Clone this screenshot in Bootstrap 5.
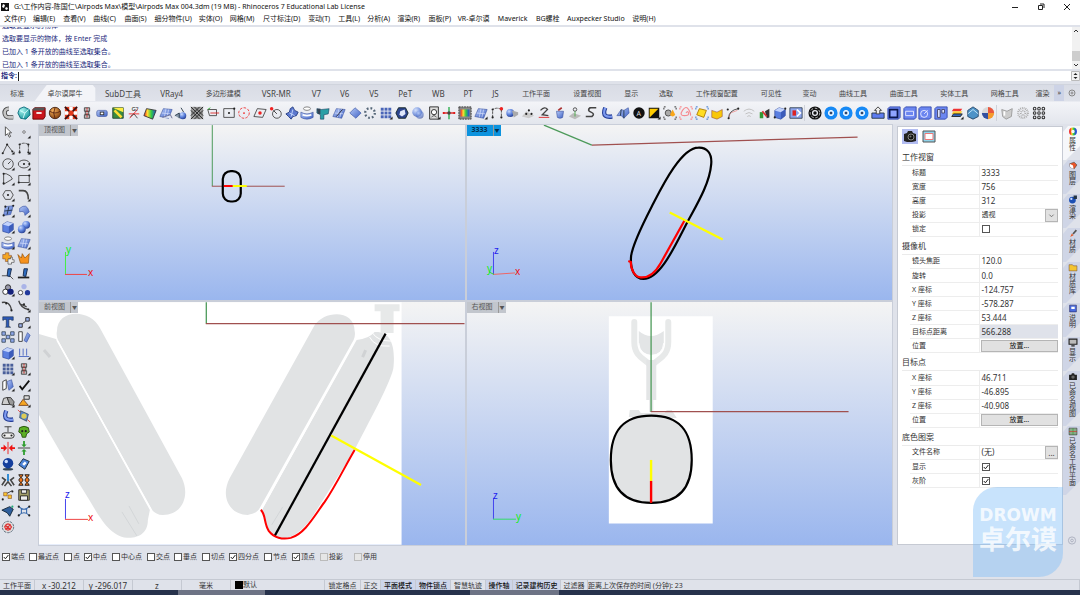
<!DOCTYPE html>
<html lang="zh-CN">
<head>
<meta charset="utf-8">
<meta name="viewport" content="width=device-width, initial-scale=1">
<title>Rhinoceros 7</title>
<link href="https://cdn.jsdelivr.net/npm/bootstrap@5.3.0/dist/css/bootstrap.min.css" rel="stylesheet">
<script src="https://cdn.jsdelivr.net/npm/bootstrap@5.3.0/dist/js/bootstrap.bundle.min.js"></script>
<style>
:root{--frame:#dfe2ea;--line:#c3c8d2;--ink:#333}
body{font-family:"Noto Sans","Noto Sans CJK SC",sans-serif;font-size:7px;line-height:10px;color:var(--ink);background:var(--frame)}
button{border:0;background:none;padding:0;font:inherit;color:inherit;line-height:inherit;white-space:nowrap}
svg{display:block}
.s8{font-size:8px}
.app-shell{min-height:100vh;position:relative}
.titlebar{height:13px;background:#fff;color:#111}
.winctl{gap:18px;padding-right:9px}
.menubar{height:12px;background:#fff;color:#111;grid-template-columns:29fr 30fr 30fr 31fr 30fr 44fr 31fr 33fr 45fr 30fr 29fr 30fr 31fr 29fr 40fr 38fr 31fr 65fr 446fr;padding-left:4px}
.menubar button{text-align:left}
.history{height:46px;border:solid var(--frame);border-width:2px 0;background:#fff;color:#1c2a7c}
.history-log{line-height:13px;margin-top:-8px;padding-left:2px}
.prompt{height:10px;background:#fff;color:#1c2a7c}
.prompt input{border:0;border-left:1px solid #222;outline:0;height:9px;padding:0;font:inherit}
.prompt label{font-weight:700;padding:0 1px 0 1px}
.scroller{width:8px;background:#f1f1f1}
.scroller i{width:8px;height:10px;background:#cdcdcd;margin-top:7px}
.tabbar{margin-top:3px;height:17px;border-top:1px solid #d0d4dd;background:linear-gradient(#d9dce5,#dfe2ea);color:#444;overflow:hidden}
.tabgrid{grid-template-columns:35fr 65fr 48fr 50fr 54fr 53fr 28fr 29fr 30fr 33fr 34fr 26fr 29fr 53fr 50fr 39fr 31fr 71fr 39fr 38fr 50fr 52fr 50fr 52fr 24fr}
.tabgrid button{height:16px;overflow:hidden;padding-top:2px}
.tabgrid button.on{background:#f3f4f8;clip-path:polygon(0 100%,12px 0,90% 0,94% 3px,94% 100%);padding-right:4px}
.more-tabs{background:#cdd3e6;padding:0 3px}
.toolrow{height:23px;background:linear-gradient(#f3f4f8,#e3e6ed);padding:0 33px 0 0;border-top:1px solid #e9ebf1}
.toolrow button{flex:1 1 0;min-width:0}
.toolrow svg,.sidetools svg{width:14px;height:14px;margin:auto}
.tsep{width:3px;height:16px;border-left:1px solid #cfd2da}
.sidetools{width:38px;padding:0 6px 11px 0;grid-template-columns:1fr 1fr;grid-auto-rows:1fr}
.views{grid-template-columns:1fr 1fr;grid-template-rows:175fr 243fr;gap:2px;background:#c9ced9;border:1px solid #c9ced9}
.view3d{position:relative;overflow:hidden;background:linear-gradient(#f4f4f4,#9ab6ee);min-height:0}
.view3d>svg{position:absolute;inset:0;width:100%;height:100%}
.vtag{position:absolute;left:0;top:0;height:11px;background:#c2c6cd;color:#555}
.vtag b{font-weight:400;padding:0 5px}
.vtag span{border-left:1px solid #999;font-size:5px;padding:0 1px}
.vtag.cur{background:#0c93de;color:#04304f}
.vtag.cur b{font-weight:700}
.props{width:166px;background:#fff;margin:2px 0 1px 4px;border:1px solid #c6cad3;padding:2px 4px 0}
.picks{height:19px;gap:3px}
.picks button{width:16px;height:15px}
.picks button.on{background:#b3bdf2}
.sect{font-size:8px;line-height:17px;height:18px;border-bottom:1px solid #ebebeb;margin:0;font-weight:400}
.ptable{width:148px;margin-left:8px;border-collapse:collapse;table-layout:fixed}
.ptable td,.ptable th{height:14px;padding:0 0 0 2px;border-bottom:1px solid #ededed;font-weight:400;line-height:12px;white-space:nowrap}
.ptable th{width:69px;border-right:1px solid #ededed}
.ptable td{font-size:8px}
.ptable td.full{padding:0 0 0 1px}
.ptable td.locked{background:#dfe2ea}
.grey-btn{background:#e1e1e1;border:1px solid #b5b5b5;font-size:7px;line-height:10px;width:100%;display:block;height:12px;color:#111}
.side-btn{width:13px;height:13px;background:#e1e1e1;border:1px solid #b5b5b5;line-height:9px}
.ptable select{appearance:none;border:0;background:none;font:inherit;font-size:7px;color:inherit;padding:0;width:60px;line-height:10px}
input[type=checkbox]{appearance:none;width:8px;height:8px;border:1px solid #555;background:#fff;margin:0;flex:none;display:block}
input[type=checkbox]:checked{background:#fff url("data:image/svg+xml,%3Csvg xmlns='http://www.w3.org/2000/svg' viewBox='0 0 6 6'%3E%3Cpath d='M.8 3 2.4 4.8 5.4 1' fill='none' stroke='%23222'/%3E%3C/svg%3E")}
input[type=checkbox]:disabled{border-color:#bbb;background:#e6e6e6}
.vtabs{width:17px;padding:2px 0 0}
.vtabs button{width:17px;padding:1px 0 9px 2px;line-height:7px;background:#cfd5e6;clip-path:polygon(0 6px,5px 0,100% 0,100% calc(100% - 14px),3px 100%,0 100%)}
.vtabs button.on{background:#f6f7fa}
.vtabs svg{width:10px;height:9px;margin:0 auto 1px}
.vtabs span{display:block;width:7px;margin:auto;white-space:normal;word-break:break-all}
.osnaps{height:33px;padding:7px 0 0 2px;grid-template-columns:27fr 35fr 20fr 28fr 35fr 27fr 28fr 27fr 35fr 28fr 28fr 34fr 726fr}
.osnaps label{gap:1px;height:8px;white-space:nowrap}
.statusbar{height:11px;border-top:1px solid #c5c9d2;grid-template-columns:35fr 49fr 49fr 49fr 49fr 94fr 36fr 20fr 35fr 35fr 35fr 27fr 48fr 27fr 492fr;overflow:hidden}
.statusbar>*{border-right:1px solid #c5c9d2;overflow:hidden;white-space:nowrap;text-align:center;line-height:12px}
.statusbar .on{background:#cdd5ea;color:#111;font-weight:500}
.taskbar{height:5px;background:#27324c}
.taskbar i{height:5px;background:#6d7385}
.wmark{position:absolute;right:17px;bottom:18px;width:90px;height:90px;border-radius:24px 0 24px 0;background:rgba(124,188,247,.42);color:rgba(255,255,255,.8);text-align:center;font-weight:700;padding-top:18px}
.wmark div{font-family:"DejaVu Sans";font-size:17px;line-height:20px}
.wmark p{font-size:26px;line-height:28px;margin:0}
</style>
</head>
<body>
<svg width="0" height="0" class="position-absolute" aria-hidden="true"><defs>
<radialGradient id="gb" cx=".35" cy=".3" r=".8"><stop offset="0" stop-color="#c9dafd"/><stop offset=".5" stop-color="#5f84de"/><stop offset="1" stop-color="#1f3688"/></radialGradient>
<radialGradient id="gt" cx=".35" cy=".3" r=".8"><stop offset="0" stop-color="#a6f3ee"/><stop offset="1" stop-color="#0c8f95"/></radialGradient>
<radialGradient id="go" cx=".35" cy=".3" r=".8"><stop offset="0" stop-color="#f6b25c"/><stop offset="1" stop-color="#7a3606"/></radialGradient>
<linearGradient id="gr"><stop offset="0" stop-color="#e22"/><stop offset=".3" stop-color="#fd3"/><stop offset=".6" stop-color="#3c4"/><stop offset="1" stop-color="#24d"/></linearGradient>
<linearGradient id="gl" x2="1" y2="1"><stop offset="0" stop-color="#b5c9f8"/><stop offset="1" stop-color="#3f62c4"/></linearGradient>
</defs></svg>

<div class="app-shell d-flex flex-column">
  <header class="titlebar d-flex align-items-center">
    <svg width="10" height="10" viewBox="0 0 10 10"><path d="M1 1h8v8H1z" fill="#111"/><path d="M3 2l2 1-1 3-2-1zM6 5l2 1-1 2-2-1z" fill="#fff"/></svg>
    <span class="ms-1 flex-fill text-nowrap">G:\工作内容-陈国仁\Airpods Max\模型\Airpods Max 004.3dm (19 MB) - Rhinoceros 7 Educational Lab License</span>
    <div class="winctl d-flex">
      <button aria-label="最小化"><svg width="8" height="8" viewBox="0 0 8 8"><path d="M1 4.500h6" stroke="#222"/></svg></button>
      <button aria-label="还原"><svg width="8" height="8" viewBox="0 0 8 8" fill="none" stroke="#222"><path d="M1.500 2.500h4v4h-4zM3 1h4v4"/></svg></button>
      <button aria-label="关闭"><svg width="8" height="8" viewBox="0 0 8 8"><path d="M1 1l6 6M7 1L1 7" stroke="#222"/></svg></button>
    </div>
  </header>
  <nav class="menubar d-grid align-items-center">
    <button>文件(F)</button><button>编辑(E)</button><button>查看(V)</button><button>曲线(C)</button><button>曲面(S)</button><button>细分物件(U)</button><button>实体(O)</button><button>网格(M)</button><button>尺寸标注(D)</button><button>变动(T)</button><button>工具(L)</button><button>分析(A)</button><button>渲染(R)</button><button>面板(P)</button><button>VR-卓尔谟</button><button>Maverick</button><button>BG螺栓</button><button>Auxpecker Studio</button><button>说明(H)</button>
  </nav>
  <section class="history d-flex overflow-hidden">
    <div class="history-log flex-fill"><div>选取要显示的物体</div><div>选取要显示的物体，按 Enter 完成</div><div>已加入 1 条开放的曲线至选取集合。</div><div>已加入 1 条开放的曲线至选取集合。</div></div>
    <div class="scroller d-flex flex-column align-items-center justify-content-between">
      <svg width="6" height="8" viewBox="0 0 6 8"><path d="M1 5l2-2 2 2" fill="none" stroke="#333"/></svg><i class="mt-auto"></i>
      <svg width="6" height="8" viewBox="0 0 6 8"><path d="M1 3l2 2 2-2" fill="none" stroke="#333"/></svg>
    </div>
  </section>
  <section class="prompt d-flex align-items-center"><label for="cmd">指令:</label><input id="cmd" class="flex-fill">
    <svg width="9" height="10" viewBox="0 0 9 10"><path d="M.5 .5h8v9h-8z" fill="#f4f4f4" stroke="#bbb"/><path d="M2.500 4l2-2 2 2zM2.500 6l2 2 2-2z" fill="#222"/></svg></section>
  <div class="tabbar d-flex">
    <div class="tabgrid d-grid flex-fill">
      <button>标准</button><button class="on">卓尔谟犀牛</button><button class="s8">SubD工具</button><button class="s8">VRay4</button><button>多边形建模</button><button class="s8">VSR-MR</button><button class="s8">V7</button><button class="s8">V6</button><button class="s8">V5</button><button class="s8">PeT</button><button class="s8">WB</button><button class="s8">PT</button><button class="s8">JS</button><button>工作平面</button><button>设置视图</button><button>显示</button><button>选取</button><button>工作视窗配置</button><button>可见性</button><button>变动</button><button>曲线工具</button><button>曲面工具</button><button>实体工具</button><button>网格工具</button><button>渲染</button>
    </div>
    <button class="more-tabs">»</button>
    <button class="px-1" aria-label="选项"><svg width="8" height="8" viewBox="0 0 8 8" fill="none" stroke="#888"><circle cx="4" cy="4" r="3"/><circle cx="4" cy="4" r="1"/></svg></button>
  </div>
  <div class="toolrow d-flex align-items-center" id="topTools"></div>

  <main class="d-flex flex-fill">
    <div class="sidetools d-grid" id="sideTools"></div>
    <div class="views d-grid flex-fill">
      <div class="view3d"><svg viewBox="39 125 426 175" fill="none">
        <path d="M212.500 125v61" stroke="#4c9a5a"/><path d="M212 186.200h73" stroke="#a0504f"/>
        <rect x="223" y="171" width="18" height="30.500" rx="8" stroke="#000" stroke-width="2.200"/>
        <path d="M224 186h9" stroke="#f00" stroke-width="2"/><path d="M233 186h14" stroke="#ff0" stroke-width="2"/>
        <path d="M65.500 252v22" stroke="#4e4"/><path d="M65 274.500h22" stroke="#e44"/>
        <text x="66" y="253" font-size="10" fill="#1e1">y</text><text x="88" y="276" font-size="10" fill="#e11">x</text></svg>
        <div class="vtag d-flex"><b>顶视图</b><span>▼</span></div></div>
      <div class="view3d"><svg viewBox="467 125 426 175" fill="none">
        <path d="M544 125l48 20" stroke="#4c9a5a" stroke-width="1.300"/><path d="M592 145l266-8" stroke="#a0504f" stroke-width="1.200"/>
        <path d="M698.700 147.500C707 147.200 712.500 153 711.500 164C710 183 698 203 687.700 222C676 244 661 279 643.700 279C635 279 630 270 631.300 256C633 243 645 220 652.700 205C661 189 681 147.500 698.700 147.500Z" stroke="#000" stroke-width="2.200"/>
        <path d="M670 212.500l53 27" stroke="#ff0" stroke-width="2.200"/>
        <path d="M628.500 261L631 262C631 270 635 277 641 277.500C650 278 656 272 661 263L684.500 221" stroke="#f00" stroke-width="2.200"/>
        <path d="M493.500 252v22.500" stroke="#44e"/><path d="M493 274.500l22-1.500" stroke="#e66"/><path d="M489 272l5 2.500" stroke="#3d3"/>
        <text x="494" y="254" font-size="10" fill="#22e">z</text><text x="487" y="272" font-size="10" fill="#1e1">y</text><text x="515" y="275" font-size="10" fill="#e11">x</text></svg>
        <div class="vtag cur d-flex"><b>3333</b><span>▼</span></div></div>
      <div class="view3d"><svg viewBox="39 302 426 243" fill="none">
        <path d="M39 302h363v243H39z" fill="#fff"/>
        <g fill="#e1e3e4">
          <path d="M57 331C57 309 90 308 100 328L182 478C190 494 184 515 163 515C158 515 155 513 152 510L58 340Q56 335 57 331Z"/>
          <path d="M39 334l17 5L150 510Q149 515 148 520C148 534 138 538 127 538C110 536 100 518 90 501C70 469 54 441 39 415Z"/>
          <path d="M355 331C355 309 325 310 315 325L230 478C220 497 230 515 248 515C254 514 258 512 260 508L354 340Q356 335 355 331Z"/>
          <path d="M357 340q12-1 18-8c14-1 21 10 19 34c0 12-28 62-39 84l-38 60c-10 17-24 31-38 28c-9-2-12-10-14-19l-3-9z"/>
          <path d="M375 304h25v7h-6v22h-13v-22h-6z" fill="#e7e9e9"/></g>
        <path d="M57 340l95 171M355 341l-93 168" stroke="#fff" stroke-width="1.500"/>
        <path d="M370 337q5 10 20 9M373 333q5 8 19 8" stroke="#fff"/><path d="M122 512l15 24M129 506l10 18M283 507l-11 18" stroke="#d3d6d8"/><path d="M44 350l6 7M366 350l-3 7" stroke="#d0d2d4" stroke-width="3"/>
        <path d="M206.500 302v21.500" stroke="#4c9a5a" stroke-width="1.300"/><path d="M206 323.500h259" stroke="#a0504f" stroke-width="1.300"/>
        <path d="M386 333.500L274.700 536.500" stroke="#000" stroke-width="2.200"/>
        <path d="M331.500 435.500l90 49.500" stroke="#ff0" stroke-width="2.200"/>
        <path d="M261 510C266 514 264 523 269 531C274 538 283 540 291 538C305 534 314 517 325 502C336 486 345 467 355 450" stroke="#f00" stroke-width="2"/>
        <path d="M65.500 499v20" stroke="#44e"/><path d="M65 519.500h23" stroke="#e44"/>
        <text x="65" y="498" font-size="10" fill="#22e">z</text><text x="88" y="521" font-size="10" fill="#e11">x</text></svg>
        <div class="vtag d-flex"><b>前视图</b><span>▼</span></div></div>
      <div class="view3d"><svg viewBox="467 302 426 243" fill="none">
        <path d="M609 316h104v207.500H609z" fill="#fff"/>
        <path d="M634.500 322v20c0 14 9 16 15 22M668.500 322v20c0 14-9 16-15 22" stroke="#e7e9e9" stroke-width="6" stroke-linecap="round"/>
        <path d="M639 331q12 10 25 0v14q-2 10-12 10t-13-10z" fill="#e3e5e6"/>
        <path d="M646.500 360h10v40h-3v12h-4v-12h-3zM629 417l1-7h9l2 3h24l2-3h5l5 8z" fill="#e3e5e6"/>
        <path d="M639 343q1 12 12 12.500q12-.500 13-12.500" stroke="#fff"/>
        <path d="M651.500 415.600C680 415.600 692 431 692 460C692 487 680 503 651.500 503C623 503 611 487 611 460C611 431 623 415.600 651.500 415.600Z" fill="#e1e3e4" stroke="#000" stroke-width="2.200"/>
        <path d="M651.300 302v110" stroke="#4c9a5a" stroke-width="1.300"/><path d="M651 411.600h198" stroke="#a0504f" stroke-width="1.200"/>
        <path d="M651.300 460v21" stroke="#ff0" stroke-width="2.400"/><path d="M651.300 481v22" stroke="#f00" stroke-width="2.400"/>
        <path d="M493.500 498v21" stroke="#44e"/><path d="M493 519.300h23" stroke="#3d6"/>
        <text x="493" y="499" font-size="10" fill="#22e">z</text><text x="516" y="520" font-size="10" fill="#1e1">y</text></svg>
        <div class="vtag d-flex"><b>右视图</b><span>▼</span></div></div>
    </div>
    <aside class="props">
      <div class="picks d-flex">
        <button class="on" aria-label="摄像机"><svg width="16" height="15" viewBox="0 0 16 15"><path d="M2 5l3-1 1-2h4l1 2 3 1v7l-4 1H5l-3-1z" fill="#222"/><circle cx="9" cy="8" r="3" fill="#111" stroke="#888"/><circle cx="8.500" cy="7.500" r="1" fill="#777"/></svg></button>
        <button aria-label="视窗"><svg width="16" height="15" viewBox="0 0 16 15"><path d="M2 2h12v11H2z" fill="#8fd3ea" stroke="#555"/><path d="M4 4.500h8v6H4z" fill="#fff" stroke="#e77"/></svg></button>
      </div>
      <h2 class="sect">工作视窗</h2>
      <table class="ptable"><tr><th>标题</th><td>3333</td></tr><tr><th>宽度</th><td>756</td></tr><tr><th>高度</th><td>312</td></tr>
        <tr><th><label for="proj">投影</label></th><td><div class="d-flex justify-content-between align-items-center"><select id="proj"><option>透视</option></select><svg class="side-btn" viewBox="0 0 13 13"><path d="M4 5.500l2.500 2.500L9 5.500" fill="none" stroke="#666"/></svg></div></td></tr>
        <tr><th><label for="lock">锁定</label></th><td><input type="checkbox" id="lock"></td></tr></table>
      <h2 class="sect">摄像机</h2>
      <table class="ptable"><tr><th>镜头焦距</th><td>120.0</td></tr><tr><th>旋转</th><td>0.0</td></tr><tr><th>X 座标</th><td>-124.757</td></tr><tr><th>Y 座标</th><td>-578.287</td></tr><tr><th>Z 座标</th><td>53.444</td></tr><tr><th>目标点距离</th><td class="locked">566.288</td></tr><tr><th>位置</th><td class="full"><button class="grey-btn">放置...</button></td></tr></table>
      <h2 class="sect">目标点</h2>
      <table class="ptable"><tr><th>X 座标</th><td>46.711</td></tr><tr><th>Y 座标</th><td>-46.895</td></tr><tr><th>Z 座标</th><td>-40.908</td></tr><tr><th>位置</th><td class="full"><button class="grey-btn">放置...</button></td></tr></table>
      <h2 class="sect">底色图案</h2>
      <table class="ptable"><tr><th>文件名称</th><td><div class="d-flex justify-content-between align-items-center"><span>(无)</span><button class="side-btn">...</button></div></td></tr>
        <tr><th><label for="show">显示</label></th><td><input type="checkbox" id="show" checked></td></tr><tr><th><label for="gray">灰阶</label></th><td><input type="checkbox" id="gray" checked></td></tr></table>
    </aside>
    <div class="vtabs d-flex flex-column" id="vtabs"></div>
  </main>

  <div class="osnaps d-grid" id="osnaps"></div>
  <footer class="statusbar d-grid">
    <span>工作平面</span><span class="s8">x -30.212</span><span class="s8">y -296.017</span><span class="s8">z</span><span>毫米</span>
    <span class="d-flex align-items-center ps-1"><svg width="8" height="8" viewBox="0 0 8 8" class="flex-shrink-0"><path d="M0 0h8v8H0z"/></svg>默认</span>
    <button>锁定格点</button><button>正交</button><button class="on">平面模式</button><button class="on">物件锁点</button><button>智慧轨迹</button><button class="on">操作轴</button><button class="on">记录建构历史</button><button>过滤器</button><span class="text-start">距离上次保存的时间 (分钟): 23</span>
  </footer>
  <div class="taskbar d-flex"><i style="width:8%;margin-left:16.500%"></i><i style="width:8.300%;margin-left:19%"></i></div>
  <div class="wmark"><div>DROWM</div><p>卓尔谟</p></div>
</div>

<script>
const K='stroke="#444" fill="none"', B='fill="url(#gl)" stroke="#3a539f" stroke-width=".7"', S='fill="url(#gb)"', R='fill="#e11"';
const dot=(x,y,c='#222',r=1.2)=>`<circle cx="${x}" cy="${y}" r="${r}" fill="${c}"/>`;
const tick='<path d="M15.500 12v3.500H12z" fill="#222"/>';
const corners=c=>`<path d="M1 4V1h3M15 4V1h-3M1 12v3h3M15 12v3h-3" fill="none" stroke="${c}" stroke-dasharray="2 1"/>`;
const grid=(n,c)=>{let s='';for(let i=0;i<n*n;i++)s+=`<path d="M${2+(i%n)*(13/n)} ${2+(i/n|0)*(13/n)}h${10/n}v${10/n}h-${10/n}z" fill="${(typeof c==='function')?c(i):c}"/>`;return s};
const ring='<circle cx="8" cy="8" r="5" fill="#9fd2fb" stroke="#1689f5" stroke-width="5"/><circle cx="8" cy="8" r="3" fill="#bfe2ff" stroke="#fff" stroke-width="1"/><circle cx="8" cy="8" r="1.500" fill="#346"/>';
const blueSq=x=>`<path d="M1 3l2-2h12v12l-2 2H1z" fill="#6b86f0" stroke="#3148ad"/>${x}`;
const sheet='<path d="M1 12L5 3l10 1-4 10z" '+B+'/><path d="M3 8l10 1M8 3l-2 10M11 4L9 13" stroke="#dfe8ff" stroke-width=".7"/>';
const cube='<path d="M2 5l5-3 7 2v7l-5 4-7-2z" fill="#5b7fe0" stroke="#2c4590" stroke-width=".7"/><path d="M2 5l5-3 7 2-5 3z" fill="#c2d2fb"/><path d="M9 7l5-3v7l-5 4z" fill="#3c5cba"/>';
const elbow='<path d="M6 2C2 12 8 13 14 12" fill="none" stroke="#263f96" stroke-width="5"/><path d="M6 2C2 12 8 13 14 12" fill="none" stroke="#7e9bf0" stroke-width="2.500"/>';
const cyl='<ellipse cx="8" cy="3" rx="4" ry="2" fill="#fff" stroke="#777"/><path d="M1 7q7 4 14 0v6q-7 4-14 0z" '+B+'/><path d="M3 10q5 2 10 0" stroke="#fff" fill="none" stroke-width="2"/>';
const chain='<path d="M5 2h6v4H5zM5 10h6v4H5zM6 6h4v4H6z" fill="#bbb" stroke="#444"/><path d="M8 2v12" stroke="#e22" stroke-dasharray="2 1"/>';
const curveSq=`<path d="M3 13V4q5-3 10 0v9" ${K} stroke-dasharray="3 1"/>${dot(3,4)+dot(13,4)+dot(3,13)+dot(13,13)}`;
const top1=[
'<path d="M9 3C2 3 3 13 9 13H14" fill="none" stroke="#444" stroke-width="5"/><path d="M9 3C2 3 3 13 9 13H14" fill="none" stroke="#c6c6c6" stroke-width="3"/>',
'<path d="M8 1l6 3 1 6-5 5-6-1-3-6 2-5z" fill="url(#gt)" stroke="#067"/><path d="M3 5l6 3 4-4M9 8l-2 6" stroke="#dff" fill="none"/>',
'<path d="M1 4l2-2h12v10l-2 3H1z" fill="#c9141c" stroke="#600"/><path d="M1 4l2-2h12l-2 3H1z" fill="#555"/><path d="M5 8h6" stroke="#fff" stroke-width="2"/>',
'<circle cx="8" cy="8" r="6.500" fill="url(#go)" stroke="#421"/><path d="M2 6q6 4 12 0M8 2q-3 6 0 12" stroke="#521" fill="none"/>',
'<path d="M1 1h14v14H1z" fill="#e33a1c"/><path d="M6 1h4v4H6zM1 6h4v4H1zM11 6h4v4h-4zM6 11h4v4H6z" fill="#fff"/><path d="M1 1l5 5M15 1l-5 5M1 15l5-5M15 15l-5-5" stroke="#311" stroke-width="2"/>',chain,
'<rect x="2" y="5" width="12" height="7" rx="2" '+B+'/><rect x="6" y="7" width="4" height="3" fill="#fff" stroke="#333"/>',
'<path d="M2 2h12v12H2z" fill="#3b8b3f" stroke="#243"/><path d="M2 2l12 5V2z" fill="#fe4"/><path d="M4 5l8 8" stroke="#fd3" stroke-width="3"/>',
'<path d="M2 9h12M3 14L12 4" stroke="#e22"/><path d="M4 12l4-3 4 5" '+K+'/><text x="5" y="6" font-size="7" fill="#222">G?</text>',
'<path d="M4 3l11 2-4 10L1 11z" fill="url(#gr)" stroke="#333"/>',
sheet+'<path d="M4 13l9-3 2 4" fill="#dfe6f5" stroke="#668"/>','<circle cx="10" cy="11" r="4" '+S+'/><path d="M1 11l5-3v6M8 2l3 5" stroke="#234" fill="#89a"/>',
`<path d="M1 1h14v14H1z" fill="#999"/><path d="M1 1l14 14M1 5l10 10M5 1l10 10M15 1L1 15M11 1L1 11M15 5L5 15" stroke="#222"/>`,
`<path d="M2 4h10v7H4z" ${K}/><path d="M2 4l3-2" stroke="#2a2"/><path d="M5 8h10" stroke="#d22"/>`,`<path d="M2 3h12v10H2z" ${K}/>`+dot(8,8)+dot(14,3),
'<circle cx="8" cy="8" r="6" fill="none" stroke="#e33" stroke-dasharray="3 1.500"/>'+dot(8,8,'#e22',1),`<path d="M1 12L5 3l10 1-4 9z" ${K}/>`+dot(8,8,'#e22',2),
`<circle cx="9" cy="9" r="5" ${K}/><path d="M9 9l-4-4" stroke="#333"/>`+dot(3,3,'#e22',2),'<path d="M9 1l2 4 4 2-2 4-4 1-2 3-3-3-3-3 4-2 1-4z" fill="#5b78cf" stroke="#223a80"/><path d="M5 8l6 3M9 4l-2 8" stroke="#cdf" fill="none"/>',cyl,
'<path d="M1 3l5 1 9-1-1 6-5 1v5H5v-5L1 8z" fill="#2b9fa6" stroke="#135" stroke-width=".6"/><path d="M1 3h4v6H2z" fill="#345"/>',sheet+'<path d="M5 12l7-8" stroke="#112"/>','<path d="M8 2l7 6-6 6-7-6z" '+B+'/>',
'<circle cx="8" cy="8" r="5.500" fill="none" stroke="#567" stroke-width="2.600" stroke-dasharray="2 2.300"/>',grid(3,'#4a65b8')+tick,
'<path d="M4 2h8l3 6-3 6H4L1 8z" fill="#2c458e" stroke="#122"/><path d="M6 6l5-2 1 5-4 3-3-2z" fill="#dfe7fb"/>','<circle cx="7" cy="7" r="5.500" '+S+' opacity=".7"/><circle cx="10" cy="10" r="4.500" fill="url(#gb)" opacity=".6"/>',
`<path d="M3 1h10v14H3z" fill="#ddd" stroke="#222"/><circle cx="8" cy="7" r="3" fill="#fff" stroke="#222"/><path d="M5 13q3-4 6 0" ${K}/>`+tick,'<path d="M1 8h14" stroke="#d11" stroke-width="1.500"/><path d="M8 1v14" stroke="#2a4" stroke-width="1.500"/>'+dot(8,8,'#444',2)+dot(2,8,'#d11')+dot(14,8,'#d11'),
'<path d="M1 1h14v14H1z" fill="#888" stroke="#333" stroke-dasharray="2 1"/><path d="M3 4h10v8H3z" fill="url(#gr)"/>',sheet+tick,curveSq+dot(13,3,'#e22',2),'<circle cx="6" cy="8" r="4.500" '+S+'/><path d="M8 5l7 2v3l-5 3z" fill="#aaa"/>',
'<path d="M1 12l5-6 9 5-6 3z" fill="#ccc"/>'+dot(9,5)+dot(12,9)+dot(6,9),`<path d="M2 13h12" stroke="#d22"/><path d="M4 5q5-5 8-1l-6 6 7 1" ${K} stroke-width="1.500"/>`,'<path d="M4 6h8l-1 7q-3 2-6 0z" '+B+'/><path d="M6 5l4-3" stroke="#a33" stroke-width="2"/>',
'<path d="M1 12l5-4 9 3-7 4z" fill="#bbb"/><circle cx="8" cy="4" r="2" '+K+'/><path d="M8 6v6" stroke="#4a4"/>',`<path d="M14 2H7q-4 3 1 5t1 5H2" ${K} stroke-width="1.800"/>`,elbow,'<path d="M1 11l5-7 3 1 5-3 1 6-6 6-3-3z" '+B+'/><path d="M6 4l-1 7M9 5l0 9" stroke="#234"/>',
'<circle cx="8" cy="8" r="6.500" fill="#111"/><text x="5" y="11" font-size="8" fill="#ddd">A</text>','<path d="M2 2h12v12H2z" fill="#111"/><path d="M3 3h10L3 13z" fill="#fc0"/>'+tick,corners('#222')+'<circle cx="6" cy="8" r="3.500" fill="#aaa" stroke="#444"/><path d="M11 4l3 6q-3 4-6 0z" fill="#f9a71b"/>',
'<path d="M8 8q2-3 3 0t-5 3-2-6 7-1 2 7" fill="none" stroke="#f58a90" stroke-width="1.300"/>'+corners('#f66'),corners('#26c')+'<path d="M5 3l8 2-3 8-8-3z" fill="#fd2" stroke="#a70"/>','<path d="M2 5l6 2 6-3v8l-6 3-6-2z" fill="#f8c70a" stroke="#844" stroke-width=".6"/>',
'<path d="M3 14L5 8l8-3" fill="none" stroke="#e99"/><path d="M3 14Q3 5 14 3" '+K+'/>'+dot(2,4)+dot(14,3)+dot(3,14),'<path d="M2 6q6-5 12 0M4 9q4-3 8 0M6 12q2-2 4 0" fill="none" stroke="#bbb"/>','<path d="M2 7h4v7H2z" fill="#393"/><path d="M8 6l5-3v10l-3 1z" fill="#333"/><path d="M5 6l5 6" stroke="#d33" stroke-width="2"/>',
cube+dot(14,3)+dot(2,13),'<path d="M1 2h14v12H1z" fill="#8da5ec" stroke="#345"/><path d="M4 5h4v6H4z" fill="#d22"/><path d="M9 4l4 4-4 4" fill="none" stroke="#fff" stroke-width="2"/>','|',
'<circle cx="8" cy="8" r="5.500" fill="none" stroke="#111" stroke-width="4"/><circle cx="8" cy="8" r="5.500" fill="none" stroke="#fff" stroke-width=".8" stroke-dasharray="3 2"/><circle cx="8" cy="8" r="2" fill="#111"/>',ring,ring,ring,
'<path d="M1 8h14v6H1z" fill="#5d7cf0" stroke="#234"/><path d="M8 1l4 4h-2v4H6V5H4z" fill="#eee" stroke="#333"/>',blueSq('<path d="M3 4h9v9H3z" fill="#8ea4ff" stroke="#0b1850" stroke-width="2"/>'),blueSq('<path d="M3 6h9v5H3z" fill="none" stroke="#eef"/>'),blueSq('<circle cx="7" cy="9" r="4" fill="none" stroke="#eef"/><path d="M7 9l4-4" stroke="#eef"/>'),blueSq('<path d="M4 4h3v9H4zM9 4h3v4H9z" fill="#dce4ff" stroke="#446"/>'),
'<path d="M4 3h10l-2 3H2z" fill="#e33"/><path d="M4 6h10l-2 3H2z" fill="#fc3"/><path d="M4 9h10l-2 3H2z" fill="#36b" stroke="#222"/>'+tick,'<path d="M8 1l6 4v7l-6 3-6-3V5z" fill="#4d93c8" stroke="#246"/><path d="M2 9l6-5 6 5" fill="none" stroke="#cef"/>','<circle cx="8" cy="8" r="7" fill="#d8d8d8"/><path d="M8 8V1a7 7 0 0 1 7 7z" fill="#e9573e"/><path d="M8 8h7a7 7 0 0 1-7 7z" fill="#f59a2d"/><path d="M8 8v7a7 7 0 0 1-7-7z" fill="#33509f"/>','|',
'<path d="M2 4l6 2 6-3-1 9-6 3-4-3z" fill="#ccc" stroke="#999"/><path d="M5 6v5" stroke="#fff" stroke-width="2"/>','<circle cx="8" cy="8" r="5.500" fill="none" stroke="#aaa" stroke-width="2.500" stroke-dasharray="1 1"/><circle cx="8" cy="8" r="2.500" fill="none" stroke="#aaa" stroke-width="2" stroke-dasharray="1 1"/>',
[3,8,13].map(y=>[3,8,13].map(x=>`<circle cx="${x}" cy="${y}" r="1.500" fill="none" stroke="#333" stroke-width="1.200"/>`).join('')).join('')];
const side=[
'<path d="M5 2v10l2.500-2 2 4 1.500-1-2-4h3z" fill="#fff" stroke="#444"/>','<circle cx="8" cy="8" r="1.500" fill="none" stroke="#777"/>'+tick,
`<path d="M2 14L7 4l6 8" ${K}/>`+dot(2,14)+dot(7,4)+dot(13,12)+tick,curveSq+tick,
`<circle cx="8" cy="8" r="6" ${K}/><path d="M8 8l3-3" stroke="#333"/>`+tick,`<ellipse cx="8" cy="8" rx="6.500" ry="4.500" ${K}/>`+dot(8,8)+dot(14,8)+tick,
`<path d="M3 2l3 0q6 2 7 6l-10 6z" ${K}/>`+dot(3,2)+dot(3,13)+tick,`<path d="M2 4h12v8H2z" ${K}/>`+dot(2,12)+dot(14,4)+tick,
`<path d="M5 3h6l3 5-3 5H5L2 8z" ${K}/>`+dot(8,8)+tick,`<path d="M2 3h5q6 0 6 10" ${K} stroke-width="1.800"/>`+tick,
'<path d="M3 13L5 3l9-1-3 10z" '+B+'/><path d="M4 8l9-1M9 3L7 12" stroke="#234"/>'+dot(5,3)+dot(14,2)+dot(3,13)+tick,'<path d="M3 5q8-7 11 4l-5 4q0-6-6-4z" '+B+'/>'+tick,cube+tick,
'<circle cx="10.500" cy="5.500" r="4.500" '+S+'/><circle cx="5.500" cy="10.500" r="4.500" '+S+'/>'+tick,cyl+tick,sheet+tick,
'<path d="M2 4h3V2h4v3h3v4H9v3H5V9H2z" fill="#f5a623" stroke="#854" stroke-width=".7"/><path d="M8 9h3V7h2v3h2v3h-3v2H8z" fill="#eee" stroke="#444" stroke-width=".7"/>','<path d="M1 4l4 4 1-5 3 5 5-5-1 11H4z" fill="#f6921e" stroke="#8a4a00" stroke-width=".7"/>',
'<path d="M1 10h9l4 4" '+K+'/><path d="M8 2l4 0-2 9-3-1z" fill="#2f6dc0" stroke="#124"/>','<path d="M1 12h13" stroke="#222" stroke-width="2"/><path d="M8 2h4l-2 9-3-1z" fill="#2f6dc0" stroke="#124"/>',
'<circle cx="8" cy="5" r="3" fill="#99a" stroke="#222"/><circle cx="5" cy="10" r="3" fill="#fff" stroke="#222"/><circle cx="11" cy="10" r="3.500" fill="#14217a"/>'+tick,'<circle cx="8" cy="4" r="3" fill="#aab4e8"/><circle cx="4" cy="11" r="2.500" fill="#fff" stroke="#444"/><circle cx="12" cy="11" r="3" fill="#223a9c"/>',
`<path d="M1 4q9-2 11 9" ${K} stroke-width="1.500"/>`+dot(6,5)+dot(12,13),`<path d="M2 2q2 8 11 10M5 6l6 3" ${K} stroke-width="1.500"/>`+dot(8,6)+dot(13,12)+tick,
'<path d="M2 2h12v4h-2l-1-1H9v8l2 1H5l1-1V5H4L3 6H2z" fill="#2d59b8" stroke="#123" stroke-width=".6"/>','<path d="M2 10h4v4H2zM10 3h4v4h-4z" fill="#9fb5ef" stroke="#222"/><path d="M6 10l4-3" stroke="#333"/>'+tick,
'<path d="M1 2h4v4H1zM1 10h4v4H1zM11 2h4v4h-4zM11 10h4v4h-4zM6 6h4v4H6z" fill="#8fa8ea" stroke="#234" stroke-width=".8"/>','<path d="M2 2h4v11H2z" fill="#fff" stroke="#333"/><path d="M8 12l4-9 3 3-4 8z" '+B+'/>',
cube+tick,'<path d="M2 12h12M3 3v8M7 3v8M11 3v8" stroke="#4764c0"/>'+tick,grid(3,'#4a5f9a')+tick,chain+tick,
'<path d="M2 4l4-2v10l-4 2z" fill="#fff" stroke="#333"/><path d="M7 4l5-2 2 8-5 4z" '+B+'/>'+tick,'<path d="M3 9l3 4 8-10" fill="none" stroke="#111" stroke-width="2"/>'+tick,
'<path d="M1 12l2-7 4-1 3 8z" fill="#ccc" stroke="#333"/><path d="M7 4h4l4 5-1 4-4-1z" fill="#999" stroke="#333"/>'+tick,'<path d="M2 13l5-7 6 7z" fill="#f6a623" stroke="#742"/><path d="M8 2h6v4H8z" fill="#ddd" stroke="#222"/>'+tick,
elbow,'<path d="M4 2l9 4-2 8-8-4z" fill="#5a88c8" stroke="#234" stroke-width=".7"/><circle cx="8" cy="8" r="3" fill="#dc5"/><path d="M1 1l3 3M12 12l3 3" stroke="#d44"/>',
'<rect x="1" y="9" width="14" height="6" rx="3" fill="#eee" stroke="#222"/><path d="M4 2h8M8 2v6" stroke="#333"/>'+dot(4,12)+dot(12,12),'<path d="M3 3q5-3 10 0l1 5-3 2-1 4H6l-1-4-3-2z" fill="#5caf23" stroke="#254d0d"/>'+dot(6,7)+dot(10,7),
'<path d="M8 1v14" stroke="#e11"/><path d="M7 8L3 4v3H0v2h3v3zM9 8l4-4v3h3v2h-3v3z" '+R+'/>','<path d="M1 8h14" stroke="#333"/><path d="M8 7L5 4h2V0h2v4h2zM8 9l-3 3h2v4h2v-4h2z" fill="#2c9c2c"/>',
'<ellipse cx="8" cy="14" rx="6" ry="1.500" fill="#345"/><circle cx="8" cy="7" r="6" fill="#143e9c"/><circle cx="6" cy="5" r="2" fill="#cdf"/>','<path d="M2 9l5-7 7 3-5 9z" fill="#4c83d6" stroke="#123"/><path d="M6 8l3-3 2 2-3 3z" fill="#fff"/>',
'<path d="M1 5l4 3-4 6M15 5l-4 3 4 6M4 15l4-5 4 5" '+K+' stroke-width="1.800"/><path d="M8 1v8" stroke="#1a7fd0" stroke-width="2"/>','<path d="M2 2h5l-2 3 2 3-2 3 2 3H2l2-3-2-3 2-3zM9 2h5l-2 3 2 3-2 3 2 3H9l2-3-2-3 2-3z" fill="#f37a1f" stroke="#111"/>',
'<path d="M3 5h4v4H3zM8 8h4v4H8z" fill="#f9c22e" stroke="#853" stroke-width=".7"/><path d="M7 6l6-3" stroke="#333"/>'+dot(13,4)+dot(2,13),'<path d="M2 2h12v12H2z" fill="#a39f68" stroke="#222"/><path d="M5 2h6v4H5zM4 9h8v5H4z" fill="#eee" stroke="#222"/>',
'<path d="M1 7l9-4 4 3-4 8-3-4z" fill="#2f5f9c" stroke="#123"/>'+dot(13,3,'#2a7'),'<path d="M2 3q6 6 12 0M2 13q6-6 12 0M5 5v6M11 5v6" fill="none" stroke="#36a" stroke-width="1.200"/>'+dot(2,3)+dot(14,3)+dot(2,13)+dot(14,13),
'<circle cx="8" cy="8" r="6.500" fill="#ddd" stroke="#567" stroke-dasharray="3 1"/><path d="M4 8q4-7 8 0-4 7-8 0M5 6l6 5M11 5l-6 6" fill="none" stroke="#d33" stroke-width="1.500"/>'];
const icon=(s,i)=>s==='|'?'<span class="tsep"></span>':`<button aria-label="工具 ${i+1}"><svg viewBox="0 0 16 16">${s}</svg></button>`;
topTools.innerHTML=top1.map(icon).join('');
sideTools.innerHTML=side.map(icon).join('');
const tabs=[['属性','<circle cx="8" cy="8" r="5" fill="none" stroke="url(#gr)" stroke-width="4"/>'],['图层','<path d="M2 5l8-3 5 5-5 7-7-3z" fill="#e8542a" stroke="#444"/><path d="M2 5l6 3 1 6-6-3z" fill="#fff"/>'],['渲染','<circle cx="7" cy="9" r="6" fill="#1c4fb4"/><circle cx="5" cy="7" r="2" fill="#cdf"/><path d="M9 1h6v6H9z" fill="#234"/>'],['材质','<path d="M3 14l3-6 3 3z" fill="#e05a2a"/><path d="M8 9l6-7" stroke="#555" stroke-width="3"/>'],['材质库','<path d="M1 3h6l2 2h6v9H1z" fill="#f4c430" stroke="#754"/>'],['说明','<path d="M2 2h12v12H2z" fill="#4a6ce0" stroke="#225"/><path d="M5 5h6v4H5z" fill="#fff"/>'],['显示','<path d="M1 2h14v9H1z" fill="#bbb" stroke="#222" stroke-width="2"/><path d="M5 14h6" stroke="#222" stroke-width="2"/>'],['已命名视图','<path d="M1 5h4l1-3h4l1 3h4v9H1z" fill="#222"/><circle cx="8" cy="9" r="3" fill="#666"/>'],['已命名工作平面','<path d="M1 2h14v12H1z" fill="#8a8" stroke="#333"/><path d="M8 2v12" stroke="#2a2"/><path d="M1 8h14" stroke="#d22"/>']];
vtabs.innerHTML=tabs.map(([t,s],i)=>`<button class="${i?'':'on'}"><svg viewBox="0 0 16 16">${s}</svg><span>${t}</span></button>`).join('')+'<svg class="mt-auto" viewBox="0 0 10 10" fill="none" stroke="#a9aebd"><circle cx="5" cy="5" r="4"/><circle cx="5" cy="5" r="1.500"/></svg>';
const snaps=['端点*','最近点','点','中点*','中心点','交点','垂点','切点','四分点*','节点','顶点*','投影-','停用-'];
osnaps.innerHTML=snaps.map(n=>`<label class="d-flex align-items-center"><input type="checkbox"${n.endsWith('*')?' checked':''}${n.endsWith('-')?' disabled':''}>${n.replace(/[*-]/,'')}</label>`).join('');
</script>
</body>
</html>
